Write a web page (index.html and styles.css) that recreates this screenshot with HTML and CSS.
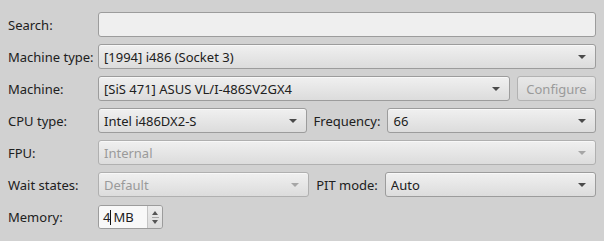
FILE: index.html
```html
<!DOCTYPE html>
<html>
<head>
<meta charset="utf-8">
<link rel="stylesheet" href="styles.css">
</head>
<body>
<div class="form">
  <div class="row">
    <div class="label">Search:</div>
    <div class="field input"></div>
  </div>
  <div class="row">
    <div class="label">Machine type:</div>
    <div class="field combo"><span class="text">[1994] i486 (Socket 3)</span><span class="arrow"></span></div>
  </div>
  <div class="row">
    <div class="label">Machine:</div>
    <div class="field combo"><span class="text">[SiS 471] ASUS VL/I-486SV2GX4</span><span class="arrow"></span></div>
    <div class="button disabled">Configure</div>
  </div>
  <div class="row">
    <div class="label">CPU type:</div>
    <div class="field combo"><span class="text">Intel i486DX2-S</span><span class="arrow"></span></div>
    <div class="sublabel">Frequency:</div>
    <div class="field combo"><span class="text">66</span><span class="arrow"></span></div>
  </div>
  <div class="row">
    <div class="label">FPU:</div>
    <div class="field combo disabled"><span class="text">Internal</span><span class="arrow"></span></div>
  </div>
  <div class="row">
    <div class="label">Wait states:</div>
    <div class="field combo disabled"><span class="text">Default</span><span class="arrow"></span></div>
    <div class="sublabel">PIT mode:</div>
    <div class="field combo"><span class="text">Auto</span><span class="arrow"></span></div>
  </div>
  <div class="row">
    <div class="label">Memory:</div>
    <div class="spin">
      <div class="spin-edit"><span class="num">4</span><span class="caret"></span><span class="unit">MB</span></div>
      <div class="spin-buttons"><span class="up"></span><span class="sep"></span><span class="down"></span></div>
    </div>
  </div>
</div>
</body>
</html>
```

FILE: styles.css
```css
html, body {
  margin: 0;
  padding: 0;
  background: #d1d1d1;
  width: 604px;
  height: 241px;
  overflow: hidden;
}
body {
  font-family: "Noto Sans", "DejaVu Sans", sans-serif;
  font-size: 13px;
  color: #202020;
}
.form {
  display: flex;
  flex-direction: column;
  gap: 7px;
  padding: 12px 8px 0 8px;
}
.row {
  display: flex;
  align-items: center;
  gap: 7px;
  height: 25px;
}
.label {
  width: 83px;
  flex: none;
  white-space: nowrap;
}
.sublabel {
  flex: none;
  white-space: nowrap;
}
.field {
  flex: 1 1 0;
  min-width: 0;
  height: 25px;
  box-sizing: border-box;
  border: 1px solid #9c9c9c;
  border-radius: 3px;
}
.input {
  background: #efefef;
}
.combo {
  display: flex;
  align-items: center;
  padding: 0 9px 0 5px;
  background: linear-gradient(#f0f0f0, #dcdcdc);
  box-shadow: inset 0 1px 0 #f8f8f8;
}
.combo .text {
  flex: 1;
  white-space: nowrap;
  overflow: hidden;
}
.arrow {
  width: 0;
  height: 0;
  border-left: 4px solid transparent;
  border-right: 4px solid transparent;
  border-top: 4px solid #4a4a4a;
  margin-top: 1px;
}
.combo.disabled {
  border-color: #b0b0b0;
  color: #9a9a9a;
}
.combo.disabled .arrow {
  border-top-color: #a6a6a6;
}
.button {
  flex: none;
  width: 79px;
  height: 25px;
  box-sizing: border-box;
  border: 1px solid #b2b2b2;
  border-radius: 3px;
  background: linear-gradient(#e8e8e8, #d8d8d8);
  display: flex;
  align-items: center;
  justify-content: center;
}
.button.disabled {
  color: #9a9a9a;
}
.spin {
  display: flex;
  width: 65px;
  height: 24px;
  box-sizing: border-box;
  border: 1px solid #9c9c9c;
  border-radius: 3px;
  overflow: hidden;
  margin-top: 1px;
}
.spin-edit {
  flex: 1;
  background: #f8f8f8;
  display: flex;
  align-items: center;
  padding-left: 4px;
}
.caret {
  width: 1px;
  height: 15px;
  background: #111;
  margin: 0 2px 0 0;
}
.spin-buttons {
  width: 14px;
  background: linear-gradient(#ececec, #dcdcdc);
  border-left: 1px solid #c4c4c4;
  display: flex;
  flex-direction: column;
  align-items: center;
  justify-content: center;
  gap: 2px;
}
.up {
  width: 0;
  height: 0;
  border-left: 3px solid transparent;
  border-right: 3px solid transparent;
  border-bottom: 4px solid #555;
}
.down {
  width: 0;
  height: 0;
  border-left: 3px solid transparent;
  border-right: 3px solid transparent;
  border-top: 4px solid #555;
}
.sep {
  width: 7px;
  height: 1px;
  background: #a8a8a8;
}
```
